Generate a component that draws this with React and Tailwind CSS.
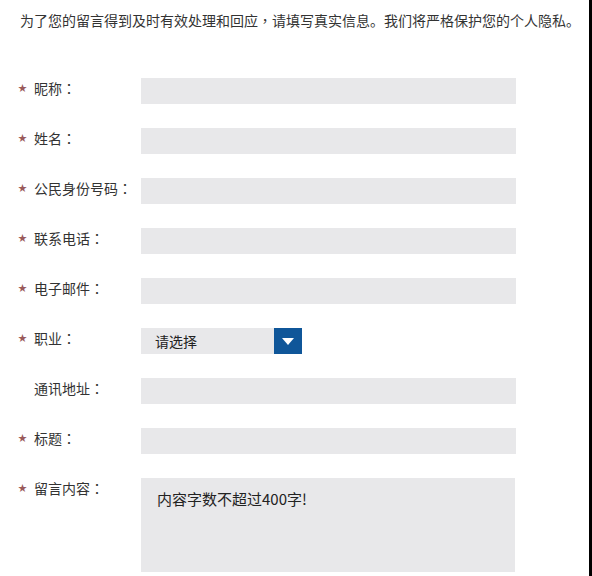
import React from 'react';

const rows = [
  { label: '昵称', required: true },
  { label: '姓名', required: true },
  { label: '公民身份号码', required: true },
  { label: '联系电话', required: true },
  { label: '电子邮件', required: true },
  { label: '职业', required: true, type: 'select' },
  { label: '通讯地址', required: false },
  { label: '标题', required: true },
  { label: '留言内容', required: true, type: 'textarea' },
];

const tc = { fontFamily: '"Noto Sans CJK TC", sans-serif' };

const Star = ({ show }) => (
  <span className={`w-[16px] shrink-0 text-[9px] leading-5 ${show ? 'text-[#9a5a5a]' : 'text-transparent'}`}>★</span>
);

const Field = ({ type }) => {
  if (type === 'select') {
    return (
      <div className="flex h-[26px] w-[161px] bg-[#e8e8ea]">
        <div className="flex-1 pl-[14px] text-[14px] leading-[26px] text-[#222]">请选择</div>
        <div className="flex w-[28px] items-center justify-center bg-[#0f5699]">
          <svg width="12" height="7" viewBox="0 0 12 7">
            <path d="M0 0 L12 0 L6 7 Z" fill="#ffffff" />
          </svg>
        </div>
      </div>
    );
  }
  if (type === 'textarea') {
    return (
      <div className="h-[94px] w-[374px] bg-[#e8e8ea] pl-[16px] pt-[12px] text-[15px] leading-[18px] text-[#222]">
        内容字数不超过400字!
      </div>
    );
  }
  return <div className="h-[26px] w-[375px] bg-[#e8e8ea]" />;
};

export default function App() {
  return (
    <div
      className="h-[576px] w-[592px] border-r-[3px] border-black bg-white text-[#333]"
      style={{ fontFamily: '"Noto Sans CJK SC", "Noto Sans", sans-serif' }}
    >
      <p className="pl-[20px] pt-[10px] text-[14px] leading-5 text-[#333]">
        为了您的留言得到及时有效处理和回应<span style={tc}>，</span>请填写真实信息。我们将严格保护您的个人隐私。
      </p>

      <div className="mt-[48px] flex flex-col gap-[24px]">
        {rows.map((r) => (
          <div key={r.label} className="flex items-start">
            <div className="flex w-[141px] items-center pl-[18px]">
              <Star show={r.required} />
              <span className="text-[14px] leading-5 text-[#333]">
                {r.label}
                <span style={tc}>：</span>
              </span>
            </div>
            <Field type={r.type} />
          </div>
        ))}
      </div>
    </div>
  );
}
